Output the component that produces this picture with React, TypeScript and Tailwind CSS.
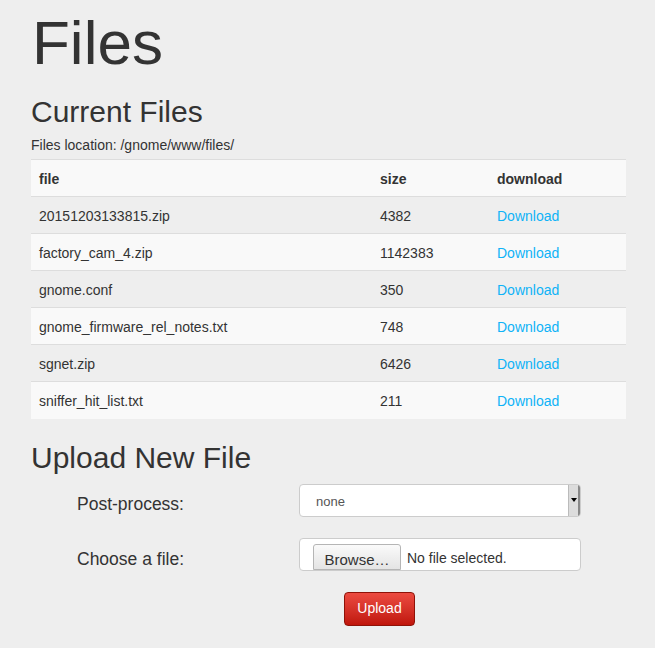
const files = [
  { name: '20151203133815.zip', size: '4382' },
  { name: 'factory_cam_4.zip', size: '1142383' },
  { name: 'gnome.conf', size: '350' },
  { name: 'gnome_firmware_rel_notes.txt', size: '748' },
  { name: 'sgnet.zip', size: '6426' },
  { name: 'sniffer_hit_list.txt', size: '211' },
];

export default function App() {
  return (
    <div className="min-h-screen bg-[#eeeeee] text-[#333333] font-['Liberation_Sans',Arial,sans-serif]">
      <div className="px-[31px] pt-[6px]">
        <h1 className="text-[62px] leading-[74px] ml-[1px]">Files</h1>

        <h2 className="text-[30px] leading-[34px] mt-[15px]">Current Files</h2>
        <p className="text-[14px] leading-[18px] mt-[7px]">Files location: /gnome/www/files/</p>

        <table className="w-[595px] mt-[5px] text-[14px] border-collapse">
          <thead>
            <tr className="bg-[#f9f9f9] border-t border-[#dddddd] h-[37px]">
              <th className="text-left font-bold pl-[8px] pt-[3px] w-[341px]">file</th>
              <th className="text-left font-bold pl-[8px] pt-[3px] w-[117px]">size</th>
              <th className="text-left font-bold pl-[8px] pt-[3px]">download</th>
            </tr>
          </thead>
          <tbody>
            {files.map((f, i) => (
              <tr
                key={f.name}
                className={`border-t border-[#dddddd] h-[37px] ${i % 2 === 0 ? 'bg-[#eeeeee]' : 'bg-[#f9f9f9]'}`}
              >
                <td className="pl-[8px] pt-[3px]">{f.name}</td>
                <td className="pl-[8px] pt-[3px]">{f.size}</td>
                <td className="pl-[8px] pt-[3px]">
                  <a href="#" className="text-[#0fb3f7]">Download</a>
                </td>
              </tr>
            ))}
          </tbody>
        </table>

        <h2 className="text-[30px] leading-[34px] mt-[22px]">Upload New File</h2>

        <div className="mt-[9px] pl-[46px] flex flex-col gap-[21px]">
          <div className="flex items-start">
            <label className="text-[17.5px] leading-[20px] w-[222px] pt-[10px]">Post-process:</label>
            <div className="flex w-[282px] h-[33px] bg-white border border-[#cccccc] rounded-[4px] overflow-hidden">
              <span className="flex-1 pl-[16px] text-[13px] text-[#555555] leading-[31px] pt-[1px]">none</span>
              <span className="w-[12px] bg-[#dcdcdc] border-l border-[#bbbbbb] flex items-center justify-center shadow-[inset_-2px_0_0_#888]">
                <span className="border-x-[3px] border-x-transparent border-t-[4px] border-t-black mr-[1px]" />
              </span>
            </div>
          </div>

          <div className="flex items-start">
            <label className="text-[17.5px] leading-[20px] w-[222px] pt-[11px]">Choose a file:</label>
            <div className="flex items-end w-[282px] h-[33px] bg-white border border-[#cccccc] rounded-[4px] overflow-hidden pl-[13px]">
              <span className="h-[26px] w-[88px] text-center text-[15px] leading-[30px] text-[#333] border border-[#b5b5b5] rounded-t-[3px] bg-gradient-to-b from-[#fafafa] to-[#e4e4e4]">
                Browse…
              </span>
              <span className="text-[14px] pl-[6px] leading-[24px] text-[#333]">No file selected.</span>
            </div>
          </div>
        </div>

        <div className="flex pl-[313px] mt-[21px]">
          <button className="w-[71px] h-[34px] text-[14px] text-white rounded-[4px] border border-[#8f1208] bg-gradient-to-b from-[#ec4a40] to-[#c0140a]">
            Upload
          </button>
        </div>
      </div>
    </div>
  );
}
